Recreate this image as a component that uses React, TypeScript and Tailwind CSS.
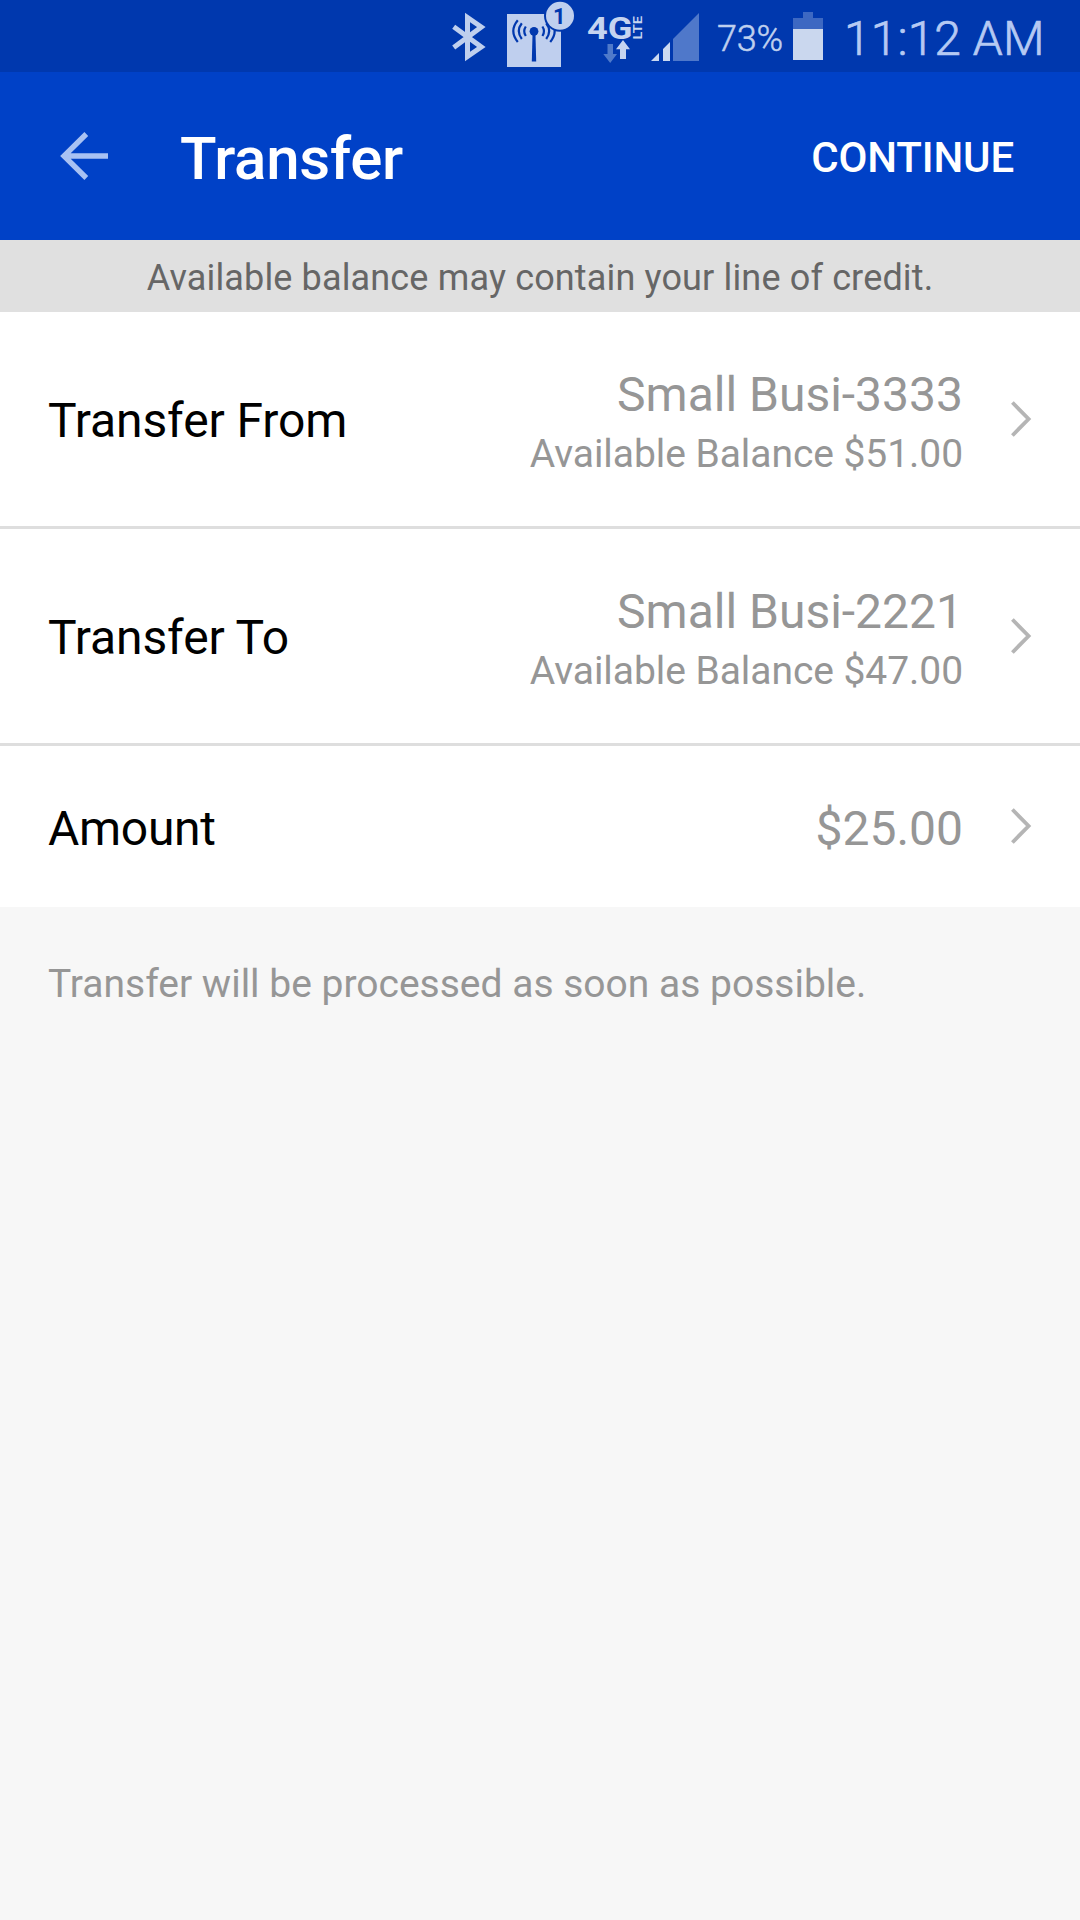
import React from "react";

const BluetoothIcon = () => (
  <svg className="ml-[450px] h-[72px] w-[38px] shrink-0" viewBox="450 0 38 72" fill="none" stroke="#bfcfee" strokeWidth="5">
    <path d="M453.7 26.7 L481.3 47 L467.5 56.5 V17.5 L481.3 27 L453.7 47.5" />
  </svg>
);

const HotspotIcon = () => (
  <svg className="ml-[18px] h-[72px] w-[70px] shrink-0" viewBox="506 0 70 72">
    <rect x="507" y="14" width="54" height="53" fill="#bfcfee" />
    <circle cx="534" cy="31.3" r="4.4" fill="#0038ae" />
    <path d="M532.6 32 H535.4 L536.2 61.5 H531.8 Z" fill="#0038ae" />
    <g fill="none" stroke="#0038ae" strokeWidth="2.2">
      <path d="M525.8 26.5 Q522.6 31.3 525.8 36" />
      <path d="M521.8 23.3 Q515.8 31 521.8 39" />
      <path d="M517.8 20.3 Q508.8 31 517.8 42" />
      <path d="M542.4 26.5 Q545.6 31.3 542.4 36" />
      <path d="M546.2 23.3 Q552.2 31 546.2 39" />
      <path d="M550.2 20.3 Q559.2 31 550.2 42" />
    </g>
    <circle cx="560" cy="15.8" r="16" fill="#0038ae" />
    <circle cx="560" cy="15.8" r="14" fill="#bfcfee" />
    <text x="559.3" y="23.7" textAnchor="middle" fontFamily="Roboto, sans-serif" fontSize="22" fontWeight="700" fill="#0038ae">1</text>
  </svg>
);

const NetworkIcon = () => (
  <svg className="ml-[11px] h-[72px] w-[58px] shrink-0" viewBox="587 0 58 72" fill="#c5d4f0">
    <text x="587" y="39" fontFamily="Roboto, sans-serif" fontSize="31" fontWeight="700" textLength="45.5" lengthAdjust="spacingAndGlyphs">4G</text>
    <text transform="translate(642 39.5) rotate(-90)" fontFamily="Roboto, sans-serif" fontSize="12.5" fontWeight="600" textLength="23.5" lengthAdjust="spacingAndGlyphs">LTE</text>
    <path d="M607.5 44 H613 V54 H617 L610.2 63 L603.3 54 H607.5 Z" fill="#4f7aca" />
    <path d="M623 40 L630 49.3 H626 V59 H620 V49.3 H616 Z" />
  </svg>
);

const SignalIcon = () => (
  <svg className="ml-[5px] h-[72px] w-[50px] shrink-0" viewBox="650 0 50 72">
    <path d="M651 61 L659 53 V61 Z M663 49 L670 42 V61 H663 Z" fill="#cbd9f1" />
    <path d="M673 39 L699 13 V61 H673 Z" fill="#4f78ca" />
  </svg>
);

const BatteryIcon = () => (
  <svg className="h-[72px] w-[30px] shrink-0" viewBox="793 0 30 72">
    <path d="M803 12 H813 V18 H823 V29 H793 V18 H803 Z" fill="#3d68c2" />
    <rect x="793" y="29" width="30" height="31" fill="#cad7ee" />
  </svg>
);

const Chevron = () => (
  <svg className="ml-[46px] h-[38px] w-[26px] shrink-0" viewBox="0 0 26 38" fill="none" stroke="#b5b5b5" strokeWidth="3.8">
    <path d="M3.4 2.5 L19.6 19 L3.4 35.5" />
  </svg>
);

type RowProps = { label: string; value: string; detail?: string };

const Row = ({ label, value, detail }: RowProps) => (
  <div
    className={
      detail
        ? "box-content flex h-[214px] items-center border-b-[3px] border-[#dedede] pr-[45px] pl-12"
        : "flex h-[161px] items-center pr-[45px] pb-0.5 pl-12"
    }
  >
    <div
      className={
        detail
          ? "flex-1 pt-1 text-5xl leading-[56px] tracking-[-0.1px] text-black"
          : "flex-1 pt-1.5 text-5xl leading-[56px] tracking-[-0.3px] text-black"
      }
    >
      {label}
    </div>
    <div className={detail ? "flex flex-col items-end pt-2 text-[#969696]" : "pt-1.5 text-[#969696]"}>
      <div className="text-5xl leading-[56px]">{value}</div>
      {detail && <div className="mt-[5px] text-[39px] leading-[52px] tracking-[-0.06px]">{detail}</div>}
    </div>
    <Chevron />
  </div>
);

export default function App() {
  return (
    <div className="flex h-[1920px] w-[1080px] flex-col overflow-hidden bg-[#f7f7f7] font-['Roboto',sans-serif] whitespace-nowrap">
      <div className="flex h-[72px] shrink-0 items-center bg-[#0038ae]">
        <BluetoothIcon />
        <HotspotIcon />
        <NetworkIcon />
        <SignalIcon />
        <div className="ml-[17px] w-[76px] pt-1.5 text-4xl leading-[42px] font-light tracking-[-0.2px] text-[#bfcfee] [-webkit-text-stroke:0.5px]">73%</div>
        <BatteryIcon />
        <div className="ml-[21px] pt-[5px] text-5xl leading-[56px] font-light tracking-[0.1px] text-[#b5c9f3] [-webkit-text-stroke:0.7px]">11:12 AM</div>
      </div>

      <div className="flex h-[168px] shrink-0 items-center bg-[#0041c7] pr-[66px] pl-[60px] text-white">
        <svg className="h-12 w-12" viewBox="0 0 48 48" fill="none" stroke="#a8c1f3" strokeWidth="5.4">
          <path d="M26.3 2 L4 24 L26.3 46 M4 24 H48" />
        </svg>
        <div className="ml-[72px] flex-1 pt-[5px] text-6xl font-medium tracking-[-0.25px]">Transfer</div>
        <div className="pt-[3px] text-[42px] font-medium tracking-[-0.15px]">CONTINUE</div>
      </div>

      <div className="flex h-[72px] shrink-0 items-center justify-center bg-[#e0e0e0] pt-[3px] text-4xl tracking-[0.15px] text-[#666666]">
        Available balance may contain your line of credit.
      </div>

      <div className="bg-white">
        <Row label="Transfer From" value="Small Busi-3333" detail="Available Balance $51.00" />
        <Row label="Transfer To" value="Small Busi-2221" detail="Available Balance $47.00" />
        <Row label="Amount" value="$25.00" />
      </div>

      <div className="px-12 pt-[51px] text-[39px] leading-[52px] text-[#969696]">
        Transfer will be processed as soon as possible.
      </div>
    </div>
  );
}
